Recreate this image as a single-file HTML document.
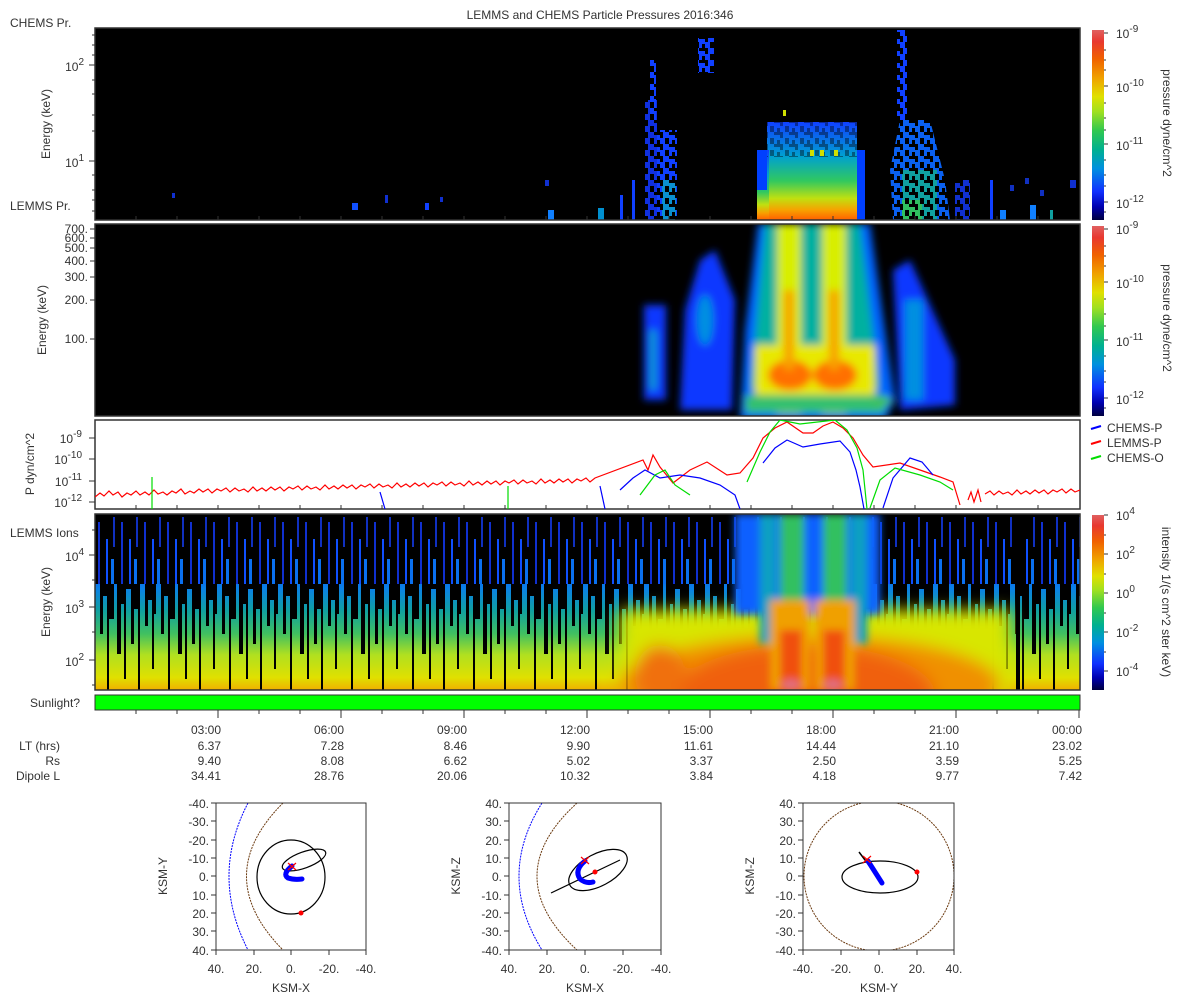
<!DOCTYPE html>
<html><head><meta charset="utf-8"><style>
html,body{margin:0;padding:0;background:#fff;width:1200px;height:1000px;overflow:hidden}
svg text{font-family:"Liberation Sans",sans-serif;fill:#333;font-size:12px}
</style></head><body>
<svg width="1200" height="1000" viewBox="0 0 1200 1000" xmlns="http://www.w3.org/2000/svg">
<defs>
<linearGradient id="cb" x1="0" y1="1" x2="0" y2="0">
<stop offset="0" stop-color="#000040"/><stop offset="0.07" stop-color="#0000b0"/><stop offset="0.15" stop-color="#1030ff"/><stop offset="0.27" stop-color="#0090e0"/><stop offset="0.37" stop-color="#00b090"/><stop offset="0.47" stop-color="#30c850"/><stop offset="0.57" stop-color="#a0e020"/><stop offset="0.65" stop-color="#e0e000"/><stop offset="0.75" stop-color="#f0a000"/><stop offset="0.85" stop-color="#f06000"/><stop offset="0.94" stop-color="#e83830"/><stop offset="1" stop-color="#e06060"/>
</linearGradient>
<linearGradient id="c1" x1="0" y1="0" x2="0" y2="1">
<stop offset="0" stop-color="#1040ff"/><stop offset="0.35" stop-color="#00a0d0"/><stop offset="0.6" stop-color="#30c860"/><stop offset="0.78" stop-color="#c0e010"/><stop offset="0.9" stop-color="#f8a000"/><stop offset="1" stop-color="#ff6000"/>
</linearGradient>
<linearGradient id="p4" x1="0" y1="514" x2="0" y2="690" gradientUnits="userSpaceOnUse">
<stop offset="0" stop-color="#1a30e0"/><stop offset="0.3" stop-color="#1050f0"/><stop offset="0.42" stop-color="#0a80e8"/><stop offset="0.55" stop-color="#10a0a0"/><stop offset="0.68" stop-color="#40c060"/><stop offset="0.8" stop-color="#b0e020"/><stop offset="0.93" stop-color="#e0e000"/><stop offset="1" stop-color="#f0b000"/>
</linearGradient>
<pattern id="st" x="95" y="514" width="61" height="177" patternUnits="userSpaceOnUse">
<rect x="0" y="0" width="5" height="60" fill="#000"/>
<rect x="5" y="0" width="3" height="120" fill="#000"/>
<rect x="8" y="0" width="4" height="82" fill="#000"/>
<rect x="12" y="0" width="2" height="177" fill="#000"/>
<rect x="14" y="0" width="5" height="105" fill="#000"/>
<rect x="19" y="0" width="3" height="50" fill="#000"/>
<rect x="22" y="0" width="4" height="140" fill="#000"/>
<rect x="26" y="0" width="3" height="90" fill="#000"/>
<rect x="29" y="0" width="2" height="165" fill="#000"/>
<rect x="31" y="0" width="5" height="75" fill="#000"/>
<rect x="36" y="0" width="3" height="130" fill="#000"/>
<rect x="39" y="0" width="4" height="95" fill="#000"/>
<rect x="43" y="0" width="2" height="177" fill="#000"/>
<rect x="45" y="0" width="5" height="65" fill="#000"/>
<rect x="50" y="0" width="3" height="112" fill="#000"/>
<rect x="53" y="0" width="4" height="86" fill="#000"/>
<rect x="57" y="0" width="2" height="155" fill="#000"/>
<rect x="59" y="0" width="2" height="100" fill="#000"/>
</pattern>
<pattern id="st2" x="95" y="514" width="23" height="70" patternUnits="userSpaceOnUse">
<rect x="0" y="0" width="23" height="70" fill="#000"/>
<rect x="3" y="8" width="2" height="62" fill="#1030d0"/>
<rect x="11" y="25" width="2" height="45" fill="#1050ff"/>
<rect x="18" y="3" width="2" height="30" fill="#1030c0"/>
<rect x="16" y="45" width="3" height="25" fill="#0a70f0"/>
</pattern>
<pattern id="spk" x="0" y="0" width="15" height="12" patternUnits="userSpaceOnUse">
<rect x="0" y="0" width="3" height="6" fill="#000"/><rect x="9" y="0" width="6" height="3" fill="#000"/>
<rect x="5" y="6" width="4" height="6" fill="#000"/><rect x="12" y="8" width="3" height="4" fill="#000"/>
</pattern>
<filter id="bl" x="-20%" y="-20%" width="140%" height="140%"><feGaussianBlur stdDeviation="4"/></filter>
<filter id="bl2" x="-20%" y="-20%" width="140%" height="140%"><feGaussianBlur stdDeviation="8"/></filter>
<clipPath id="k1"><rect x="95" y="28" width="985" height="192"/></clipPath>
<clipPath id="k2"><rect x="95" y="224" width="985" height="192"/></clipPath>
<clipPath id="k3"><rect x="95" y="420" width="985" height="89"/></clipPath>
<clipPath id="k4"><rect x="95" y="514" width="985" height="176"/></clipPath>
<clipPath id="o1"><rect x="216" y="803" width="150" height="147"/></clipPath>
<clipPath id="o2"><rect x="509" y="803" width="152" height="147"/></clipPath>
<clipPath id="o3"><rect x="803" y="803" width="151" height="147"/></clipPath>
</defs>

<text x="600" y="19" text-anchor="middle">LEMMS and CHEMS Particle Pressures  2016:346</text>

<!-- Panel 1 -->
<rect x="95" y="28" width="985" height="192" fill="#000"/>
<g clip-path="url(#k1)">
<g>
<rect x="645" y="100" width="12" height="120" fill="#1030e0"/>
<rect x="650" y="60" width="6" height="60" fill="#1040ff"/>
<rect x="657" y="130" width="20" height="90" fill="#1040ff"/>
<rect x="662" y="180" width="14" height="40" fill="#0a90d0"/>
<rect x="698" y="38" width="16" height="35" fill="#1040ff"/>
<rect x="897" y="30" width="10" height="90" fill="#1040ff"/>
<polygon points="900,120 930,120 945,180 950,220 893,220 890,170" fill="#0a60f0"/>
<rect x="902" y="170" width="35" height="50" fill="#10a0a0"/>
<rect x="902" y="200" width="20" height="20" fill="#30c060"/>
<rect x="955" y="180" width="15" height="40" fill="#1030d0"/>
</g>
<rect x="640" y="28" width="340" height="192" fill="url(#spk)"/>
<rect x="767" y="122" width="90" height="98" fill="url(#c1)"/>
<rect x="757" y="150" width="12" height="70" fill="url(#c1)"/>
<rect x="757" y="150" width="10" height="40" fill="#0040ff"/>
<rect x="857" y="150" width="8" height="70" fill="#0040ff"/>
<rect x="767" y="122" width="90" height="35" fill="url(#spk)" opacity="0.4"/>
<rect x="783" y="110" width="3" height="6" fill="#d0e000"/>
<rect x="810" y="150" width="4" height="6" fill="#d0e000"/><rect x="820" y="150" width="4" height="6" fill="#d0e000"/><rect x="834" y="150" width="4" height="6" fill="#d0e000"/>
<rect x="352" y="203" width="6" height="7" fill="#1050ff"/><rect x="385" y="195" width="3" height="8" fill="#1030d0"/>
<rect x="548" y="210" width="6" height="10" fill="#1080ff"/><rect x="598" y="208" width="6" height="12" fill="#0090d0"/>
<rect x="620" y="195" width="3" height="25" fill="#1040ff"/><rect x="632" y="180" width="3" height="40" fill="#1040ff"/>
<rect x="990" y="180" width="3" height="40" fill="#1040ff"/><rect x="1010" y="185" width="4" height="6" fill="#1030c0"/><rect x="1025" y="178" width="4" height="6" fill="#1030c0"/><rect x="1040" y="190" width="4" height="6" fill="#1030c0"/>
<rect x="1000" y="210" width="6" height="10" fill="#1080ff"/><rect x="1030" y="205" width="6" height="15" fill="#1080ff"/>
<rect x="1070" y="180" width="6" height="8" fill="#1030d0"/><rect x="1050" y="210" width="3" height="10" fill="#10a0a0"/>
<rect x="172" y="193" width="3" height="5" fill="#1030d0"/><rect x="440" y="197" width="3" height="5" fill="#1030d0"/>
<rect x="425" y="203" width="4" height="7" fill="#1040ff"/><rect x="545" y="180" width="4" height="6" fill="#1030d0"/>
</g>
<rect x="95" y="28" width="985" height="192" fill="none" stroke="#333" stroke-width="1.5"/>

<!-- Panel 2 -->
<rect x="95" y="224" width="985" height="192" fill="#000"/>
<g clip-path="url(#k2)">
<g filter="url(#bl)">
<rect x="644" y="305" width="22" height="95" fill="#0838ff"/>
<rect x="650" y="330" width="6" height="60" fill="#10a0c0"/>
<polygon points="700,260 715,250 735,300 732,410 680,410 685,310" fill="#0838ff"/>
<ellipse cx="705" cy="320" rx="8" ry="25" fill="#0090e0"/>
<polygon points="758,224 870,224 895,400 885,420 740,420 745,330" fill="#0060ff"/>
<polygon points="765,224 860,224 880,390 750,390" fill="#00b0a0"/>
<rect x="777" y="224" width="24" height="190" fill="#d8ee00"/>
<rect x="822" y="224" width="24" height="190" fill="#d8ee00"/>
<rect x="755" y="345" width="120" height="55" fill="#e8e800"/>
<ellipse cx="790" cy="375" rx="22" ry="15" fill="#ff7000"/>
<ellipse cx="835" cy="375" rx="22" ry="15" fill="#ff7000"/>
<rect x="784" y="290" width="10" height="80" fill="#f8a000"/>
<rect x="829" y="290" width="10" height="80" fill="#f8a000"/>
<rect x="745" y="395" width="140" height="18" fill="#30c070"/>
<polygon points="893,270 910,260 955,360 955,405 900,410" fill="#0838ff"/>
<rect x="905" y="300" width="18" height="100" fill="#0090e0"/>
<ellipse cx="882" cy="401" rx="10" ry="5" fill="#40c060"/>
</g>
</g>
<rect x="95" y="224" width="985" height="192" fill="none" stroke="#333" stroke-width="1.5"/>

<!-- Panel 3 -->
<rect x="95" y="420" width="985" height="89" fill="#fff" stroke="#333" stroke-width="1.5"/>
<g clip-path="url(#k3)" fill="none" stroke-width="1.2">
<path stroke="#f00" d="M95 497 l5 -4 l4 3 l5 -5 l4 4 l5 -3 l4 5 l5 -4 l4 2 l5 -4 l4 4 l5 -3 l4 3 l5 -5 l4 4 l5 -2 l4 3 l5 -4 l4 2 l5 -4 l4 5 l5 -3 l4 2 l5 -4 l4 3 l5 -3 l4 4 l5 -4 l4 2 l5 -3 l4 4 l5 -4 l4 3 l5 -2 l4 3 l5 -5 l4 4 l5 -3 l4 3 l5 -4 l4 3 l5 -3 l4 4 l5 -4 l4 2 l5 -3 l4 4 l5 -4 l4 3 l5 -2 l4 3 l5 -5 l4 4 l5 -3 l4 3 l5 -4 l4 3 l5 -3 l4 4 l5 -4 l4 2 l5 -3 l4 4 l5 -4 l4 3 l5 -2 l4 3 l5 -5 l4 4 l5 -3 l4 3 l5 -4 l4 3 l5 -3 l4 4 l5 -4 l4 2 l5 -3 l4 4 l5 -4 l4 3 l5 -2 l4 3 l5 -5 l4 4 l5 -3 l4 3 l5 -4 l4 3 l5 -3 l4 4 l5 -4 l4 2 l5 -3 l4 4 l5 -4 l4 3 l5 -2 l4 3 l5 -5 l4 4 l5 -3 l4 3 l5 -4 l4 3 l5 -3 l4 4 l5 -4 l4 2 l5 -3 l4 4 l5 -4 L643 460 L648 470 L653 455 L660 467 L673 483 L690 470 L707 462 L727 475 L740 473 L753 458 L763 438 L775 428 L787 422 L803 433 L813 433 L823 426 L833 422 L843 428 L853 438 L863 455 L873 467 L900 463 L920 470 L940 477 L953 482 L960 505 M968 500 l3 -8 l3 10 l4 -12 l3 12 M985 494 l5 -3 l4 4 l5 -4 l4 3 l5 -2 l4 3 l5 -5 l4 4 l5 -3 l4 3 l5 -4 l4 3 l5 -3 l4 4 l5 -4 l4 2 l5 -3 l4 4 l5 -4 l4 3 l5 -2 l4 3"/>
<path stroke="#00f" d="M763 463 L775 448 L787 440 L803 447 L820 444 L840 441 L850 452 L856 470 L860 487 L864 509 M883 508 L893 478 L910 458 L922 462 L933 475 M620 490 L633 478 L645 470 L660 478 L680 475 L700 478 L720 485 L735 495 L740 509 M380 492 L385 509 M600 486 L605 509"/>
<path stroke="#0d0" d="M747 482 L760 452 L770 432 L780 420 L800 424 L835 420 L847 430 L857 448 L863 470 L867 509 M640 495 L655 475 L665 470 L675 485 L690 495 M152 477 L152 509 M870 508 L880 480 L895 468 L920 475 L940 482 L953 490 M508 486 L508 509"/>
</g>
<g stroke-width="2"><line x1="1091" y1="429" x2="1101" y2="426" stroke="#00f"/><line x1="1091" y1="444" x2="1101" y2="441" stroke="#f00"/><line x1="1091" y1="459" x2="1101" y2="456" stroke="#0d0"/></g>
<text x="1107" y="432">CHEMS-P</text><text x="1107" y="447">LEMMS-P</text><text x="1107" y="462">CHEMS-O</text>

<!-- Panel 4 -->
<rect x="95" y="514" width="985" height="176" fill="url(#p4)"/>
<rect x="95" y="514" width="985" height="176" fill="url(#st)"/>
<rect x="95" y="514" width="985" height="70" fill="url(#st2)"/>
<g clip-path="url(#k4)">
<g filter="url(#bl2)">
<rect x="620" y="610" width="390" height="90" fill="#d8e600"/>
<ellipse cx="810" cy="685" rx="190" ry="50" fill="#f09000"/>
<ellipse cx="805" cy="695" rx="130" ry="50" fill="#f06010"/>
<ellipse cx="660" cy="675" rx="25" ry="30" fill="#f07010"/>
</g>
<g filter="url(#bl)">
<rect x="735" y="514" width="145" height="100" fill="#0a60ff"/>
<rect x="760" y="514" width="16" height="130" fill="#10a0c0"/>
<rect x="780" y="514" width="24" height="100" fill="#30c060"/>
<rect x="823" y="514" width="24" height="100" fill="#30c060"/>
<rect x="851" y="514" width="16" height="130" fill="#10a0c0"/>
<rect x="770" y="600" width="40" height="90" fill="#f0a000"/>
<rect x="815" y="600" width="40" height="90" fill="#f0a000"/>
<rect x="780" y="630" width="22" height="60" fill="#f05010"/>
<rect x="823" y="630" width="22" height="60" fill="#f05010"/>
<ellipse cx="791" cy="685" rx="9" ry="6" fill="#e07080"/>
<ellipse cx="833" cy="685" rx="9" ry="6" fill="#e07080"/>
</g>
</g>
<rect x="1016" y="514" width="4" height="176" fill="#000"/>
<rect x="95" y="514" width="985" height="176" fill="none" stroke="#333" stroke-width="1.5"/>

<!-- Sunlight -->
<rect x="95" y="695" width="985" height="15" fill="#00ff00" stroke="#333" stroke-width="1"/>
<text x="80" y="707" text-anchor="end">Sunlight?</text>

<!-- ticks -->
<g stroke="#333" stroke-width="1">
<path d="M136 710v4M177 710v4M218 710v8M259 710v4M300 710v4M341 710v8M382 710v4M423 710v4M464 710v8M505 710v4M546 710v4M587 710v8M628 710v4M669 710v4M710 710v8M751 710v4M792 710v4M833 710v8M874 710v4M915 710v4M956 710v8M997 710v4M1038 710v4M1079 710v8"/>
<path d="M136 220v-4M177 220v-4M218 220v-4M259 220v-4M300 220v-4M341 220v-4M382 220v-4M423 220v-4M464 220v-4M505 220v-4M546 220v-4M587 220v-4M628 220v-4M669 220v-4M710 220v-4M751 220v-4M792 220v-4M833 220v-4M874 220v-4M915 220v-4M956 220v-4M997 220v-4M1038 220v-4"/>
<path d="M136 509v-4M177 509v-4M218 509v-4M259 509v-4M300 509v-4M341 509v-4M382 509v-4M423 509v-4M464 509v-4M505 509v-4M546 509v-4M587 509v-4M628 509v-4M669 509v-4M710 509v-4M751 509v-4M792 509v-4M833 509v-4M874 509v-4M915 509v-4M956 509v-4M997 509v-4M1038 509v-4"/>
<path d="M95 65h-6M95 161h-6M95 35h-3M95 45h-3M95 55h-3M95 80h-3M95 94h-3M95 115h-3M95 131h-3M95 175h-3M95 190h-3M95 200h-3M95 211h-3"/>
<path d="M95 229h-5M95 238h-5M95 248h-5M95 261h-5M95 277h-5M95 300h-5M95 339h-5"/>
<path d="M95 438h-6M95 459h-6M95 481h-6M95 502h-6"/>
<path d="M95 555h-6M95 607h-6M95 660h-6M95 580h-3M95 632h-3M95 685h-3M95 530h-3"/>
</g>

<!-- Y labels -->
<text x="10" y="27">CHEMS Pr.</text>
<text x="10" y="210">LEMMS Pr.</text>
<text x="10" y="537">LEMMS Ions</text>
<text x="84" y="71" text-anchor="end" font-size="13">10<tspan dy="-6" font-size="10">2</tspan></text>
<text x="84" y="167" text-anchor="end" font-size="13">10<tspan dy="-6" font-size="10">1</tspan></text>
<text x="50" y="124" text-anchor="middle" transform="rotate(-90 50 124)">Energy (keV)</text>
<g text-anchor="end" font-size="12"><text x="88" y="233">700.</text><text x="88" y="242">600.</text><text x="88" y="252">500.</text><text x="88" y="265">400.</text><text x="88" y="281">300.</text><text x="88" y="304">200.</text><text x="88" y="343">100.</text></g>
<text x="46" y="320" text-anchor="middle" transform="rotate(-90 46 320)">Energy (keV)</text>
<g text-anchor="end"><text x="82" y="443">10<tspan dy="-6" font-size="10">-9</tspan></text><text x="82" y="464">10<tspan dy="-6" font-size="10">-10</tspan></text><text x="82" y="486">10<tspan dy="-6" font-size="10">-11</tspan></text><text x="82" y="507">10<tspan dy="-6" font-size="10">-12</tspan></text></g>
<text x="34" y="464" text-anchor="middle" transform="rotate(-90 34 464)">P dyn/cm^2</text>
<g text-anchor="end" font-size="13"><text x="84" y="561">10<tspan dy="-6" font-size="10">4</tspan></text><text x="84" y="613">10<tspan dy="-6" font-size="10">3</tspan></text><text x="84" y="666">10<tspan dy="-6" font-size="10">2</tspan></text></g>
<text x="50" y="602" text-anchor="middle" transform="rotate(-90 50 602)">Energy (keV)</text>

<!-- colorbars -->
<rect x="1092" y="30" width="12" height="190" fill="url(#cb)"/>
<rect x="1092" y="226" width="12" height="190" fill="url(#cb)"/>
<rect x="1092" y="515" width="12" height="175" fill="url(#cb)"/>
<g stroke="#333"><path d="M1104 33h4M1104 86h4M1104 144h4M1104 202h4M1104 50h2M1104 60h2M1104 70h2M1104 103h2M1104 118h2M1104 130h2M1104 160h2M1104 175h2M1104 186h2M1104 212h2"/>
<path d="M1104 229h4M1104 282h4M1104 340h4M1104 398h4M1104 246h2M1104 256h2M1104 266h2M1104 299h2M1104 314h2M1104 326h2M1104 356h2M1104 371h2M1104 382h2M1104 408h2"/>
<path d="M1104 515h4M1104 554h4M1104 593h4M1104 632h4M1104 671h4M1104 535h2M1104 574h2M1104 613h2M1104 652h2"/></g>
<g font-size="13"><text x="1116" y="38">10<tspan dy="-6" font-size="10">-9</tspan></text><text x="1116" y="92">10<tspan dy="-6" font-size="10">-10</tspan></text><text x="1116" y="150">10<tspan dy="-6" font-size="10">-11</tspan></text><text x="1116" y="208">10<tspan dy="-6" font-size="10">-12</tspan></text>
<text x="1116" y="234">10<tspan dy="-6" font-size="10">-9</tspan></text><text x="1116" y="288">10<tspan dy="-6" font-size="10">-10</tspan></text><text x="1116" y="346">10<tspan dy="-6" font-size="10">-11</tspan></text><text x="1116" y="404">10<tspan dy="-6" font-size="10">-12</tspan></text>
<text x="1116" y="520">10<tspan dy="-6" font-size="10">4</tspan></text><text x="1116" y="559">10<tspan dy="-6" font-size="10">2</tspan></text><text x="1116" y="598">10<tspan dy="-6" font-size="10">0</tspan></text><text x="1116" y="637">10<tspan dy="-6" font-size="10">-2</tspan></text><text x="1116" y="676">10<tspan dy="-6" font-size="10">-4</tspan></text></g>
<text x="1163" y="123" text-anchor="middle" transform="rotate(90 1163 123)">pressure dyne/cm^2</text>
<text x="1163" y="318" text-anchor="middle" transform="rotate(90 1163 318)">pressure dyne/cm^2</text>
<text x="1162" y="602" text-anchor="middle" transform="rotate(90 1162 602)">intensity 1/(s cm^2 ster keV)</text>

<!-- time labels -->
<g text-anchor="end">
<text x="221" y="734">03:00</text><text x="344" y="734">06:00</text><text x="467" y="734">09:00</text><text x="590" y="734">12:00</text><text x="713" y="734">15:00</text><text x="836" y="734">18:00</text><text x="959" y="734">21:00</text><text x="1082" y="734">00:00</text>
<text x="60" y="750">LT (hrs)</text><text x="221" y="750">6.37</text><text x="344" y="750">7.28</text><text x="467" y="750">8.46</text><text x="590" y="750">9.90</text><text x="713" y="750">11.61</text><text x="836" y="750">14.44</text><text x="959" y="750">21.10</text><text x="1082" y="750">23.02</text>
<text x="60" y="765">Rs</text><text x="221" y="765">9.40</text><text x="344" y="765">8.08</text><text x="467" y="765">6.62</text><text x="590" y="765">5.02</text><text x="713" y="765">3.37</text><text x="836" y="765">2.50</text><text x="959" y="765">3.59</text><text x="1082" y="765">5.25</text>
<text x="60" y="780">Dipole L</text><text x="221" y="780">34.41</text><text x="344" y="780">28.76</text><text x="467" y="780">20.06</text><text x="590" y="780">10.32</text><text x="713" y="780">3.84</text><text x="836" y="780">4.18</text><text x="959" y="780">9.77</text><text x="1082" y="780">7.42</text>
</g>

<!-- Orbit plot 1 -->
<g clip-path="url(#o1)" fill="none">
<path d="M248 803 Q210 876 248 950" stroke="#00f" stroke-dasharray="2 1"/>
<path d="M283 803 Q210 876 283 950" stroke="#6b3a10" stroke-dasharray="2 1"/>
<ellipse cx="291" cy="877" rx="34" ry="37" stroke="#000" stroke-width="1.2"/>
<ellipse cx="304" cy="860" rx="23" ry="8" transform="rotate(-20 304 860)" stroke="#000" stroke-width="1.2"/>
<path d="M292 866 Q282 874 288 878 Q294 880 302 879" stroke="#00f" stroke-width="5" stroke-linecap="round"/>
<path d="M288 863l8 7M296 863l-8 7" stroke="#f00" stroke-width="1.2"/>
<circle cx="301" cy="913" r="2.5" fill="#f00" stroke="none"/>
</g>
<rect x="216" y="803" width="150" height="147" fill="none" stroke="#333"/>
<!-- Orbit plot 2 -->
<g clip-path="url(#o2)" fill="none">
<path d="M542 803 Q496 876 542 950" stroke="#00f" stroke-dasharray="2 1"/>
<path d="M577 803 Q497 876 577 950" stroke="#6b3a10" stroke-dasharray="2 1"/>
<ellipse cx="598" cy="870" rx="32" ry="16" transform="rotate(-28 598 870)" stroke="#000" stroke-width="1.2"/>
<path d="M551 893 L620 860" stroke="#000" stroke-width="1.2"/>
<path d="M585 861 Q574 870 580 879 Q586 884 593 882" stroke="#00f" stroke-width="5" stroke-linecap="round"/>
<path d="M581 857l8 7M589 857l-8 7" stroke="#f00" stroke-width="1.2"/>
<circle cx="595" cy="872" r="2.5" fill="#f00" stroke="none"/>
</g>
<rect x="509" y="803" width="152" height="147" fill="none" stroke="#333"/>
<!-- Orbit plot 3 -->
<g clip-path="url(#o3)" fill="none">
<circle cx="879" cy="876" r="75" stroke="#6b3a10" stroke-dasharray="2 1"/>
<ellipse cx="880" cy="877" rx="38" ry="16" stroke="#000" stroke-width="1.2"/>
<path d="M859 852 L880 880" stroke="#000" stroke-width="1.5"/>
<path d="M868 861 L882 883" stroke="#00f" stroke-width="5" stroke-linecap="round"/>
<path d="M863 856l8 7M871 856l-8 7" stroke="#f00" stroke-width="1.2"/>
<circle cx="917" cy="872" r="2.5" fill="#f00" stroke="none"/>
</g>
<rect x="803" y="803" width="151" height="147" fill="none" stroke="#333"/>

<!-- orbit ticks -->
<g stroke="#333">
<path d="M216 803h-5M216 821h-5M216 840h-5M216 858h-5M216 876h-5M216 895h-5M216 913h-5M216 931h-5M216 950h-5M216 950v5M254 950v5M291 950v5M329 950v5M366 950v5"/>
<path d="M509 803h-5M509 821h-5M509 840h-5M509 858h-5M509 876h-5M509 895h-5M509 913h-5M509 931h-5M509 950h-5M509 950v5M547 950v5M585 950v5M623 950v5M661 950v5"/>
<path d="M803 803h-5M803 821h-5M803 840h-5M803 858h-5M803 876h-5M803 895h-5M803 913h-5M803 931h-5M803 950h-5M803 950v5M841 950v5M879 950v5M917 950v5M954 950v5"/>
</g>
<g text-anchor="end" font-size="12">
<text x="209" y="808">-40.</text><text x="209" y="826">-30.</text><text x="209" y="845">-20.</text><text x="209" y="863">-10.</text><text x="209" y="881">0.</text><text x="209" y="900">10.</text><text x="209" y="918">20.</text><text x="209" y="936">30.</text><text x="209" y="955">40.</text>
<text x="502" y="808">40.</text><text x="502" y="826">30.</text><text x="502" y="845">20.</text><text x="502" y="863">10.</text><text x="502" y="881">0.</text><text x="502" y="900">-10.</text><text x="502" y="918">-20.</text><text x="502" y="936">-30.</text><text x="502" y="955">-40.</text>
<text x="796" y="808">40.</text><text x="796" y="826">30.</text><text x="796" y="845">20.</text><text x="796" y="863">10.</text><text x="796" y="881">0.</text><text x="796" y="900">-10.</text><text x="796" y="918">-20.</text><text x="796" y="936">-30.</text><text x="796" y="955">-40.</text>
</g>
<g text-anchor="middle" font-size="12">
<text x="216" y="973">40.</text><text x="254" y="973">20.</text><text x="291" y="973">0.</text><text x="329" y="973">-20.</text><text x="366" y="973">-40.</text><text x="291" y="992">KSM-X</text>
<text x="509" y="973">40.</text><text x="547" y="973">20.</text><text x="585" y="973">0.</text><text x="623" y="973">-20.</text><text x="661" y="973">-40.</text><text x="585" y="992">KSM-X</text>
<text x="803" y="973">-40.</text><text x="841" y="973">-20.</text><text x="879" y="973">0.</text><text x="917" y="973">20.</text><text x="954" y="973">40.</text><text x="879" y="992">KSM-Y</text>
</g>
<text x="167" y="876" text-anchor="middle" transform="rotate(-90 167 876)">KSM-Y</text>
<text x="460" y="876" text-anchor="middle" transform="rotate(-90 460 876)">KSM-Z</text>
<text x="754" y="876" text-anchor="middle" transform="rotate(-90 754 876)">KSM-Z</text>
</svg>
</body></html>
